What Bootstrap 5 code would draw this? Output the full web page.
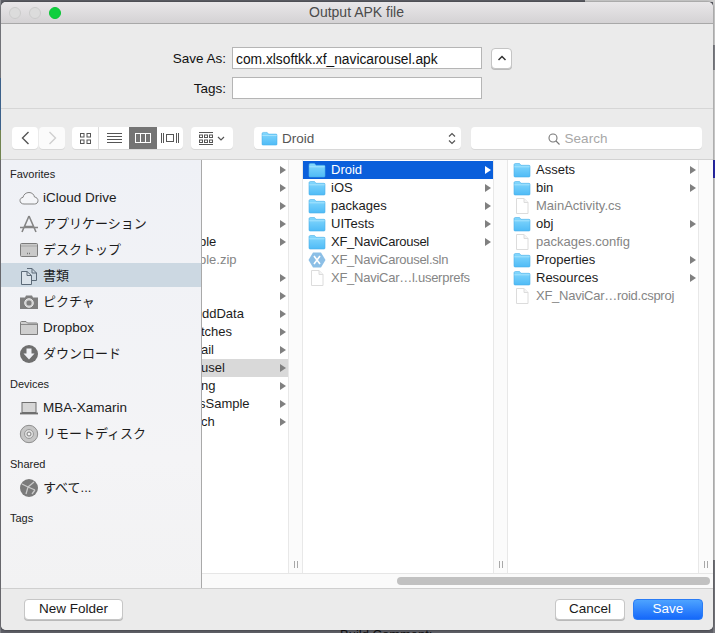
<!DOCTYPE html>
<html lang="en">
<head>
<meta charset="utf-8">
<title>Output APK file</title>
<link rel="stylesheet" href="https://cdn.jsdelivr.net/npm/bootstrap@5.3.0/dist/css/bootstrap.min.css">
<style>
html,body{height:633px;width:715px;overflow:hidden;}
body{font-family:"Liberation Sans","Noto Sans CJK JP",sans-serif;font-size:13px;color:#1c1c1c;background:#5f6068;padding:2px 2px 3px 1px;position:relative;line-height:18px;}
.defs-holder{position:absolute;width:0;height:0;overflow:hidden;}
.behind-right{position:absolute;right:0;top:0;width:2px;height:633px;background:linear-gradient(#cfcfcf 0,#cfcfcf 45px,#85868c 45px,#85868c 70px,#d4d4d4 70px,#d4d4d4 160px,#2a2ab0 160px,#2a2ab0 178px,#cfcfcf 178px,#cfcfcf 560px,#77787e 560px);}
.behind-top{position:absolute;right:0;top:0;width:130px;height:2px;background:#d0d0d0;}
.behind-left{position:absolute;left:0;top:0;width:1px;height:633px;background:linear-gradient(#8b8c92 0,#8b8c92 78px,#4a76a8 78px,#4a76a8 130px,#8aa060 130px,#8aa060 160px,#7d7e84 160px);}
.behind-text{position:absolute;left:340px;top:627px;color:#111;font-size:13px;line-height:16px;white-space:nowrap;}
.dlg{position:relative;height:628px;background:#ebebeb;border-radius:5px;display:flex;flex-direction:column;overflow:hidden;box-shadow:0 0 3px rgba(0,0,0,.5);}
.titlebar{height:22px;flex:none;background:linear-gradient(#e9e7e9,#d4d2d4);border-bottom:1px solid #a8a8a8;position:relative;}
.ttl{line-height:21px;text-align:center;color:#4b4b4b;font-size:14px;padding-right:1px;}
.lights{position:absolute;left:8px;top:5px;gap:8px;}
.lamp{width:12px;height:12px;border-radius:50%;background:#dcdcdc;border:1px solid #cbcbcb;}
.lamp-on{background:#0fcf3e;border-color:#0cc437;}
.formarea{height:85px;flex:none;border-bottom:1px solid #d6d6d6;padding:23px 0 0 0;gap:8px;}
.frow{height:22px;}
.flabel{width:225px;text-align:right;margin-right:6px;color:#111;font-size:13.5px;padding-top:2px;}
input.fld.form-control{width:250px;height:22px;border-radius:0;border:1px solid #b5b5b5;padding:2px 3px 0;font-size:13.8px;color:#111;background:#fff;box-shadow:none;line-height:18px;font-family:inherit;}
.discl{width:21px;height:21px;margin-left:9px;padding:0;border-radius:4px;border:1px solid #c4c4c4;background:#fff;box-shadow:0 1px 0 #bbb;line-height:0;}
.toolbar{height:51px;flex:none;border-bottom:1px solid #d2d2d2;padding:18px 0 0 11px;}
.tb{height:22px;background:#fff;border-radius:4px;box-shadow:0 1px 0 #d8d8d8;display:flex;align-items:center;justify-content:center;}
.tb-nav{width:26px;}
.tb-nav2{width:26px;margin-left:1px;margin-right:7px;background:#fbfbfb;}
.tb-views{width:111px;overflow:hidden;margin-right:8px;justify-content:flex-start;}
.vw{height:22px;display:flex;align-items:center;justify-content:center;}
.vw1{width:27px;border-right:1px solid #dedede;}
.vw2{width:30px;}
.vw3{width:28px;background:#747474;}
.vw4{width:26px;}
.tb-arr{width:42px;margin-right:21px;gap:4px;}
.tb-path{width:207px;margin-right:10px;justify-content:flex-start;padding:1px 5px 0 7px;color:#555;font-size:13.5px;gap:4px;}
.tb-search{width:231px;color:#a8a8a8;gap:5px;font-size:13.5px;padding:1px 18px 0 0;}
.browser{flex:1 1 auto;min-height:0;display:flex;}
.side{width:201px;flex:none;background:linear-gradient(#eff1f6,#f4f4f6 70%,#f2f2f3);border-right:1px solid #a9a9a9;padding-top:6px;}
.shead{height:16px;line-height:16px;font-size:11px;padding-left:9px;color:#222;margin-bottom:3px;margin-top:11px;}
.shead:first-child{margin-top:0;}
.sitem{height:24px;margin-bottom:2px;display:flex;align-items:center;padding:1px 0 0 18px;gap:4px;color:#1c1c1c;font-size:13.5px;}
.sitem.jp{font-size:13px;}
.sitem:last-child{margin-bottom:0;}
.sitem svg{flex:none;width:20px;height:20px;}
.sitem.on{background:#ccd8e2;}
.cols{flex:1 1 auto;min-width:0;display:flex;flex-direction:column;background:#fff;}
.colrow{flex:1 1 auto;min-height:0;display:flex;}
.fcol{padding-top:1px;flex:none;overflow:hidden;}
.fc1{width:86px;}
.fc2{width:190px;}
.fc3{width:190px;}
.grip{width:15px;flex:none;background:#fbfbfb;border-left:1px solid #e8e8e8;border-right:1px solid #e8e8e8;display:flex;align-items:flex-end;justify-content:center;gap:2px;padding-bottom:5px;}
.grip-last{border-right:0;}
.grip i{display:block;width:1px;height:7px;background:#a8a8a8;}
.frow-i{height:18px;display:flex;align-items:center;position:relative;padding-left:5px;white-space:nowrap;font-size:13px;}
.fc1 .frow-i{padding-left:0;}
.cut4{margin-left:-1px;}
.cut6{margin-left:-3px;}
.xf{letter-spacing:-.26px;}
.frow-i svg.ico{width:18px;height:16px;flex:none;margin-right:5px;}
.frow-i.dim{color:#858585;}
.frow-i.sel{background:#0a5fdb;color:#fff;}
.frow-i.cur{background:#d9d9d9;}
.arrow{position:absolute;right:2px;top:5px;width:0;height:0;border-left:6px solid #808080;border-top:4px solid transparent;border-bottom:4px solid transparent;}
.sel .arrow{border-left-color:#fff;}
.hscroll{height:15px;flex:none;background:#fafafa;border-top:1px solid #e6e6e6;padding:3px 3px 0 195px;}
.thumb{height:8px;border-radius:4px;background:#c1c1c1;}
.foot{height:42px;flex:none;border-top:1px solid #cfcfcf;padding:10px 10px 0 23px;background:#ebebeb;}
.btn.mac{height:21px;padding:0 0 1px;font-size:13.5px;line-height:18px;background:#fff;color:#1a1a1a;border:1px solid #c6c6c6;border-radius:4px;box-shadow:0 1px 0 #b9b9b9;}
.btn.w-nf{width:99px;}
.btn.w-can{width:70px;margin-right:8px;}
.btn.w-sav{width:70px;background:linear-gradient(#4da3ff,#1568fa);border-color:#2a7cf5;color:#fff;box-shadow:none;}
</style>
</head>
<body>
<svg class="defs-holder" width="0" height="0">
<defs>
<linearGradient id="fg" x1="0" y1="0" x2="0" y2="1"><stop offset="0" stop-color="#85d8fd"/><stop offset="1" stop-color="#4fbbf6"/></linearGradient>
<symbol id="folder" viewBox="0 0 18 16"><path d="M1 3C1 2.200 1.500 1.500 2.400 1.500H6.500L8 3.300H16C16.800 3.300 17 3.800 17 4.500V14C17 14.700 16.600 15 16 15H2C1.400 15 1 14.700 1 14Z" fill="url(#fg)" stroke="#4ab0ea" stroke-width=".6"/><path d="M1.300 4.800H16.700" stroke="#b0e7fe" stroke-width=".8"/></symbol>
<symbol id="doc" viewBox="0 0 18 16"><path d="M3.500 .5H11L15 4.500V15.500H3.500Z" fill="#fff" stroke="#dcdcdc"/><path d="M11 .5V4.500H15" fill="#f4f4f4" stroke="#dcdcdc"/></symbol>
<symbol id="xam" viewBox="0 0 18 16"><path d="M5 .5H13L17.500 8L13 15.500H5L.5 8Z" fill="#8cbfe6"/><path d="M6 4L12 12M12 4L6 12" stroke="#fff" stroke-width="1.600"/></symbol>
</defs>
</svg>
<div class="behind-right"></div>
<div class="behind-top"></div>
<div class="behind-left"></div>
<div class="behind-text">Build Comment:</div>
<div class="dlg">
  <div class="titlebar">
    <div class="ttl">Output APK file</div>
    <div class="lights d-flex"><span class="lamp"></span><span class="lamp"></span><span class="lamp lamp-on"></span></div>
  </div>
  <div class="formarea d-flex flex-column">
    <div class="frow d-flex align-items-center"><span class="flabel">Save As:</span><input class="fld form-control" type="text" value="com.xlsoftkk.xf_navicarousel.apk"><button class="discl btn" aria-label="collapse"><svg width="10" height="6" viewBox="0 0 10 6"><path d="M1.500 5L5 1.500L8.500 5" fill="none" stroke="#333" stroke-width="1.500"/></svg></button></div>
    <div class="frow d-flex align-items-center"><span class="flabel">Tags:</span><input class="fld form-control" type="text"></div>
  </div>
  <div class="toolbar d-flex">
    <div class="tb tb-nav"><svg width="9" height="14" viewBox="0 0 9 14"><path d="M7.500 1L1.500 7L7.500 13" fill="none" stroke="#555" stroke-width="1.400"/></svg></div>
    <div class="tb tb-nav2"><svg width="9" height="14" viewBox="0 0 9 14"><path d="M1.500 1L7.500 7L1.500 13" fill="none" stroke="#cfcfcf" stroke-width="1.400"/></svg></div>
    <div class="tb tb-views">
      <div class="vw vw1"><svg width="11" height="11" viewBox="0 0 11 11" fill="none" stroke="#555"><rect x=".5" y=".5" width="3.500" height="3.500"/><rect x="7" y=".5" width="3.500" height="3.500"/><rect x=".5" y="7" width="3.500" height="3.500"/><rect x="7" y="7" width="3.500" height="3.500"/></svg></div>
      <div class="vw vw2"><svg width="15" height="11" viewBox="0 0 15 11" stroke="#555"><path d="M0 .5H15M0 3.500H15M0 6.500H15M0 9.500H15"/></svg></div>
      <div class="vw vw3"><svg width="16" height="10" viewBox="0 0 16 10" fill="none" stroke="#fff"><rect x=".5" y=".5" width="15" height="9"/><path d="M5.500 0V10M10.500 0V10"/></svg></div>
      <div class="vw vw4"><svg width="18" height="10" viewBox="0 0 18 10" fill="none" stroke="#555"><rect x="5.500" y="1.500" width="7" height="7"/><path d="M.5 0V10M2.500 0V10M15.500 0V10M17.500 0V10"/></svg></div>
    </div>
    <div class="tb tb-arr"><svg width="14" height="13" viewBox="0 0 14 13" fill="none" stroke="#555"><path d="M0 .5H14M0 12.500H14" /><rect x=".5" y="3" width="3" height="2.500"/><rect x="5.500" y="3" width="3" height="2.500"/><rect x="10.500" y="3" width="3" height="2.500"/><rect x=".5" y="8" width="3" height="2.500"/><rect x="5.500" y="8" width="3" height="2.500"/><rect x="10.500" y="8" width="3" height="2.500"/></svg><svg width="8" height="5" viewBox="0 0 8 5"><path d="M1 1L4 4L7 1" fill="none" stroke="#555" stroke-width="1.200"/></svg></div>
    <div class="tb tb-path"><svg width="17" height="15" viewBox="0 0 18 16"><use href="#folder"/></svg><span class="flex-grow-1">Droid</span><svg width="8" height="13" viewBox="0 0 8 13" fill="none" stroke="#555" stroke-width="1.200"><path d="M1 4.500L4 1.500L7 4.500M1 8.500L4 11.500L7 8.500"/></svg></div>
    <div class="tb tb-search"><svg width="12" height="12" viewBox="0 0 12 12" fill="none" stroke="#777" stroke-width="1.100"><circle cx="5" cy="5" r="4"/><path d="M8 8L11.500 11.500"/></svg><span>Search</span></div>
  </div>
  <div class="browser">
    <div class="side">
      <div class="shead">Favorites</div>
      <div class="sitem"><svg viewBox="0 0 20 20" fill="#f4f5f8" stroke="#858585"><path d="M5 16C2.500 16 1 14.500 1 12.500C1 10.800 2.300 9.500 4 9.400C4.500 6.500 7 4.500 10 4.500C13 4.500 15 6.500 15.500 9C17.500 9.300 19 10.700 19 12.700C19 14.700 17.500 16 15.500 16Z"/></svg>iCloud Drive</div>
      <div class="sitem jp"><svg viewBox="0 0 20 20" fill="none" stroke="#858585" stroke-width="1.600"><path d="M10 2L3 18M10 2L17 18M5 12.500H15M1 13.500H19"/></svg>アプリケーション</div>
      <div class="sitem jp"><svg viewBox="0 0 20 20"><rect x="1.500" y="3.500" width="17" height="13" rx="1" fill="#c9c9c9" stroke="#7b7b7b"/><path d="M2 6H18" stroke="#a5a5a5"/><path d="M8 13.500H12" stroke="#777" stroke-width="1.500" stroke-dasharray="1 1"/></svg>デスクトップ</div>
      <div class="sitem jp on"><svg viewBox="0 0 20 20" fill="none" stroke="#5c6a78"><path d="M8 2.500H13L17.500 7V14.500H13"/><path d="M13 2.500V7H17.500"/><path d="M2.500 5.500H8L12.500 9.500V18.500H2.500Z" fill="#dbe3ea"/><path d="M8 5.500V9.500H12.500"/></svg><span>書類</span></div>
      <div class="sitem jp"><svg viewBox="0 0 20 20"><path d="M1 5.500H6L7 3.500H13L14 5.500H19V17H1Z" fill="#7f7f7f"/><circle cx="10" cy="11" r="4.300" fill="#c9c9c9" stroke="#fff" stroke-width=".8"/><circle cx="10" cy="11" r="2.500" fill="#7f7f7f"/></svg>ピクチャ</div>
      <div class="sitem"><svg viewBox="0 0 20 20"><path d="M1.500 4.500C1.500 3.900 1.900 3.500 2.500 3.500H7L8.500 5H17.500C18.100 5 18.500 5.400 18.500 6V16.500H1.500Z" fill="#cfcfcf" stroke="#7f7f7f"/><path d="M2 6.500H18" stroke="#8a8a8a"/></svg>Dropbox</div>
      <div class="sitem jp"><svg viewBox="0 0 20 20"><circle cx="10" cy="10" r="9" fill="#6f6f6f"/><path d="M7.500 4.500H12.500V9.500H15.500L10 15.500L4.500 9.500H7.500Z" fill="#f0f1f5"/></svg>ダウンロード</div>
      <div class="shead">Devices</div>
      <div class="sitem"><svg viewBox="0 0 20 20"><rect x="3" y="4.500" width="14" height="10" fill="#d6d6d6" stroke="#6f6f6f"/><path d="M1 15.500H19" stroke="#6f6f6f" stroke-width="1.800"/></svg>MBA-Xamarin</div>
      <div class="sitem jp"><svg viewBox="0 0 20 20"><circle cx="10" cy="10" r="8.700" fill="#c6c6c6" stroke="#8e8e8e"/><circle cx="10" cy="10" r="4.500" fill="#dedede" stroke="#9a9a9a"/><circle cx="10" cy="10" r="2" fill="#f4f4f4" stroke="#808080"/></svg>リモートディスク</div>
      <div class="shead">Shared</div>
      <div class="sitem jp"><svg viewBox="0 0 20 20"><circle cx="10" cy="10" r="9" fill="#7a7a7a"/><path d="M3 6L9 9L7 16M9 9L15 4M9 9L16 12M13 16L16 12" stroke="#c9c9c9" stroke-width="1.300" fill="none"/></svg>すべて...</div>
      <div class="shead">Tags</div>
    </div>
    <div class="cols">
      <div class="colrow">
        <div class="fcol fc1">
          <div class="frow-i"><span class="arrow"></span></div>
          <div class="frow-i"><span class="arrow"></span></div>
          <div class="frow-i"><span class="arrow"></span></div>
          <div class="frow-i"><span class="arrow"></span></div>
          <div class="frow-i"><span class="cut6">ple</span><span class="arrow"></span></div>
          <div class="frow-i dim"><span class="cut6">ple.zip</span></div>
          <div class="frow-i"><span class="arrow"></span></div>
          <div class="frow-i"><span class="arrow"></span></div>
          <div class="frow-i"><span>ddData</span><span class="arrow"></span></div>
          <div class="frow-i"><span class="cut4">tches</span><span class="arrow"></span></div>
          <div class="frow-i"><span class="cut4">ail</span><span class="arrow"></span></div>
          <div class="frow-i cur"><span class="cut4">usel</span><span class="arrow"></span></div>
          <div class="frow-i"><span class="cut4">ng</span><span class="arrow"></span></div>
          <div class="frow-i"><span class="cut6">sSample</span><span class="arrow"></span></div>
          <div class="frow-i"><span class="cut4">ch</span><span class="arrow"></span></div>
        </div>
        <div class="grip"><i></i><i></i></div>
        <div class="fcol fc2">
          <div class="frow-i sel"><svg class="ico"><use href="#folder"/></svg>Droid<span class="arrow"></span></div>
          <div class="frow-i"><svg class="ico"><use href="#folder"/></svg>iOS<span class="arrow"></span></div>
          <div class="frow-i"><svg class="ico"><use href="#folder"/></svg>packages<span class="arrow"></span></div>
          <div class="frow-i"><svg class="ico"><use href="#folder"/></svg>UITests<span class="arrow"></span></div>
          <div class="frow-i xf"><svg class="ico"><use href="#folder"/></svg>XF_NaviCarousel<span class="arrow"></span></div>
          <div class="frow-i dim xf"><svg class="ico"><use href="#xam"/></svg>XF_NaviCarousel.sln</div>
          <div class="frow-i dim xf"><svg class="ico"><use href="#doc"/></svg>XF_NaviCar…l.userprefs</div>
        </div>
        <div class="grip"><i></i><i></i></div>
        <div class="fcol fc3">
          <div class="frow-i"><svg class="ico"><use href="#folder"/></svg>Assets<span class="arrow"></span></div>
          <div class="frow-i"><svg class="ico"><use href="#folder"/></svg>bin<span class="arrow"></span></div>
          <div class="frow-i dim"><svg class="ico"><use href="#doc"/></svg>MainActivity.cs</div>
          <div class="frow-i"><svg class="ico"><use href="#folder"/></svg>obj<span class="arrow"></span></div>
          <div class="frow-i dim"><svg class="ico"><use href="#doc"/></svg>packages.config</div>
          <div class="frow-i"><svg class="ico"><use href="#folder"/></svg>Properties<span class="arrow"></span></div>
          <div class="frow-i"><svg class="ico"><use href="#folder"/></svg>Resources<span class="arrow"></span></div>
          <div class="frow-i dim xf"><svg class="ico"><use href="#doc"/></svg>XF_NaviCar…roid.csproj</div>
        </div>
        <div class="grip grip-last"><i></i><i></i></div>
      </div>
      <div class="hscroll"><div class="thumb"></div></div>
    </div>
  </div>
  <div class="foot d-flex">
    <button class="btn mac w-nf me-auto">New Folder</button>
    <button class="btn mac w-can">Cancel</button>
    <button class="btn mac w-sav">Save</button>
  </div>
</div>
<script src="https://cdn.jsdelivr.net/npm/bootstrap@5.3.0/dist/js/bootstrap.bundle.min.js"></script>
</body>
</html>
